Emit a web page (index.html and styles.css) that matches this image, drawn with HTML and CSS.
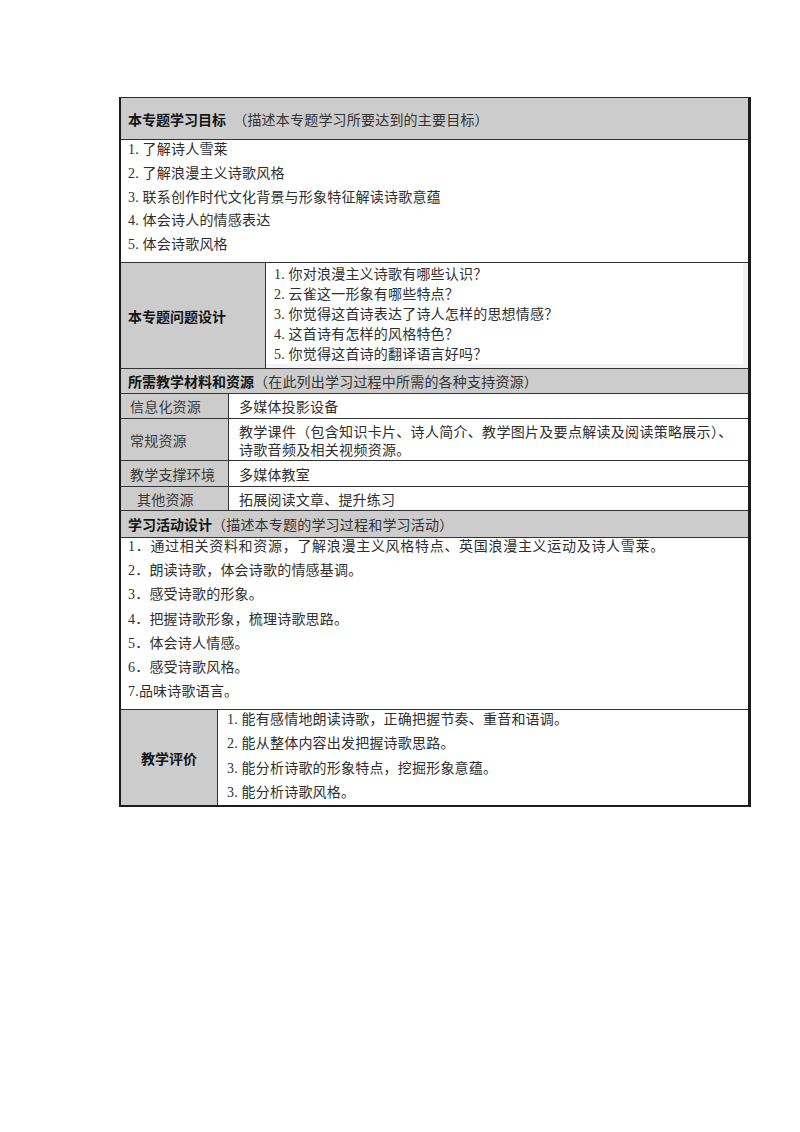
FILE: index.html
```html
<!DOCTYPE html>
<html lang="zh-CN">
<head>
<meta charset="utf-8">
<title>本专题学习设计</title>
<link rel="stylesheet" href="styles.css">
</head>
<body>
<div class="page">
  <div class="sheet">
    <div class="row head r-goal-head">
      <span class="b">本专题学习目标</span><span class="n">　（描述本专题学习所要达到的主要目标）</span>
    </div>
    <div class="row r-goals">
      <div class="lines goals">
        <div>1. 了解诗人雪莱</div>
        <div>2. 了解浪漫主义诗歌风格</div>
        <div>3. 联系创作时代文化背景与形象特征解读诗歌意蕴</div>
        <div>4. 体会诗人的情感表达</div>
        <div>5. 体会诗歌风格</div>
      </div>
    </div>
    <div class="row split r-questions">
      <div class="cell label q-label b">本专题问题设计</div>
      <div class="cell body">
        <div class="lines questions">
          <div>1. 你对浪漫主义诗歌有哪些认识？</div>
          <div>2. 云雀这一形象有哪些特点？</div>
          <div>3. 你觉得这首诗表达了诗人怎样的思想情感？</div>
          <div>4. 这首诗有怎样的风格特色？</div>
          <div>5. 你觉得这首诗的翻译语言好吗？</div>
        </div>
      </div>
    </div>
    <div class="row head r-mat-head">
      <span class="b">所需教学材料和资源</span><span class="n">（在此列出学习过程中所需的各种支持资源）</span>
    </div>
    <div class="row split r-res r-res1">
      <div class="cell label m-label">信息化资源</div>
      <div class="cell body m-body">多媒体投影设备</div>
    </div>
    <div class="row split r-res r-res2">
      <div class="cell label m-label">常规资源</div>
      <div class="cell body m-body two">教学课件（包含知识卡片、诗人简介、教学图片及要点解读及阅读策略展示）、<br>诗歌音频及相关视频资源。</div>
    </div>
    <div class="row split r-res r-res3">
      <div class="cell label m-label">教学支撑环境</div>
      <div class="cell body m-body">多媒体教室</div>
    </div>
    <div class="row split r-res r-res4">
      <div class="cell label m-label indent">其他资源</div>
      <div class="cell body m-body">拓展阅读文章、提升练习</div>
    </div>
    <div class="row head r-act-head">
      <span class="b">学习活动设计</span><span class="n">（描述本专题的学习过程和学习活动）</span>
    </div>
    <div class="row r-acts">
      <div class="lines acts">
        <div class="wide">1．通过相关资料和资源，了解浪漫主义风格特点、英国浪漫主义运动及诗人雪莱。</div>
        <div>2．朗读诗歌，体会诗歌的情感基调。</div>
        <div>3．感受诗歌的形象。</div>
        <div>4．把握诗歌形象，梳理诗歌思路。</div>
        <div>5．体会诗人情感。</div>
        <div>6．感受诗歌风格。</div>
        <div>7.品味诗歌语言。</div>
      </div>
    </div>
    <div class="row split r-eval">
      <div class="cell label e-label b">教学评价</div>
      <div class="cell body e-body">
        <div class="lines evals">
          <div>1. 能有感情地朗读诗歌，正确把握节奏、重音和语调。</div>
          <div>2. 能从整体内容出发把握诗歌思路。</div>
          <div>3. 能分析诗歌的形象特点，挖掘形象意蕴。</div>
          <div>3. 能分析诗歌风格。</div>
        </div>
      </div>
    </div>
  </div>
</div>
</body>
</html>
```

FILE: styles.css
```css
* { box-sizing: border-box; }

html, body {
  margin: 0;
  padding: 0;
  background: #ffffff;
}

body {
  font-family: "Liberation Serif", "Noto Sans CJK SC", serif;
  font-size: 14px;
  color: #2e2e2e;
}

.page {
  padding: 97px 0 0 119px;
}

.sheet {
  width: 632px;
  border-left: 2px solid #1c1c1c;
  border-right: 3px solid #1c1c1c;
  border-top: 1px solid #2a2a2a;
  border-bottom: 2px solid #1c1c1c;
}

.row {
  border-top: 1px solid #333333;
  display: flex;
}

.row:first-child {
  border-top: none;
}

.b {
  font-family: "Noto Sans CJK SC", sans-serif;
  font-weight: 700;
  color: #141414;
}

.n {
  font-family: "Noto Sans CJK SC", sans-serif;
  font-weight: 400;
  color: #333333;
  letter-spacing: 0.2px;
}

.head {
  background: #cccccc;
  align-items: center;
  padding-left: 7px;
  white-space: nowrap;
}

.r-goal-head { height: 41px; }
.r-mat-head { height: 25px; }
.r-act-head { height: 27px; }

.lines {
  display: flex;
  flex-direction: column;
  line-height: 16px;
  letter-spacing: 0.2px;
  white-space: nowrap;
}

.r-goals {
  height: 123px;
  padding: 2px 0 0 7px;
}

.goals { gap: 7.75px; }

.split .cell {
  display: flex;
}

.label {
  background: #cccccc;
  border-right: 1px solid #333333;
  align-items: center;
  flex: none;
}

.body {
  flex: 1;
}

.r-questions { height: 106px; }

.q-label {
  width: 145px;
  padding-left: 7px;
}

.r-questions .body {
  padding: 4px 0 0 8px;
  border-right: 5px solid #f1f1f1;
  border-bottom: 4px solid #f3f3f3;
}

.questions { gap: 4px; }

.r-res1 { height: 25px; }
.r-res2 { height: 42px; }
.r-res3 { height: 26px; }
.r-res4 { height: 24px; }

.m-label {
  width: 108px;
  padding-left: 9px;
  font-family: "Noto Sans CJK SC", sans-serif;
  color: #3a3a3a;
  letter-spacing: 0.2px;
}

.m-label.indent {
  padding-left: 16px;
}

.m-body {
  align-items: center;
  padding-left: 10px;
  font-family: "Noto Sans CJK SC", sans-serif;
  letter-spacing: 0.2px;
}

.m-body.two {
  line-height: 18px;
  letter-spacing: 0.3px;
}

.r-acts {
  height: 172px;
  padding: 1px 0 0 7px;
}

.acts { gap: 8.2px; }

.acts .wide {
  letter-spacing: 0.7px;
}

.r-eval { height: 96px; }

.e-label {
  width: 97px;
  justify-content: center;
}

.e-body {
  padding: 2px 0 0 9px;
}

.evals { gap: 8.3px; }
```
